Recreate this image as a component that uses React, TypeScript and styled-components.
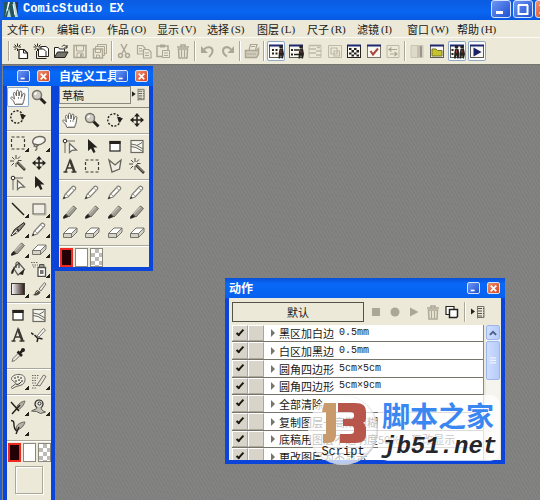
import React from "react";
import styled, { createGlobalStyle, css } from "styled-components";

const GlobalStyle = createGlobalStyle`
  *, *::before, *::after { box-sizing: border-box; }
  body {
    margin: 0;
    overflow: hidden;
    background: #808080;
    color: #1a1814;
    font: 11px/14px "Noto Sans CJK SC", sans-serif;
  }
  button { font: inherit; color: inherit; padding: 0; margin: 0; border: 0; background: none; }
  ul { list-style: none; margin: 0; padding: 0; }
`;

const beige = "#ece9d8";

/* ---------- icons ---------- */

const K = "#25221e";
const G = "#aca795";

const star = (
  <path d="M4.500 0.500v3M4.500 5.500v2.500M0.500 4h3M5.500 4h2.500M1.500 1.500l2 2M7.500 1.500l-2 2M1.500 7l2-2" stroke={K} fill="none" />
);

const hand = (
  <>
    <path
      d="M5 15.500L3.500 12 1 9.500c-.8-1 .6-2 1.600-1.200L4.500 10 3.500 4.500c0-1.500 1.600-1.500 2-.2L6.500 7V2.500C6.500.8 8.400.8 8.600 2.500L9 7l.8-4c.4-1.500 2-1.200 2 .2L11.500 8l1.500-3c.7-1.300 2.200-.6 1.900.8L14 11c-.3 2-1.300 3.300-1.500 4.500z"
      fill="#fff" stroke="#66635b" />
    <path d="M6 15h6.500l1.500-4M8.500 8v2M11 8v2" stroke="#8f8c83" fill="none" />
  </>
);

const zoomGlass = (
  <>
    <path d="M9 9l5.500 5.500" stroke={K} strokeWidth="3" />
    <circle cx="6" cy="6" r="4.500" fill="#d0cdc4" stroke="#77746c" strokeWidth="1.500" />
    <path d="M4 6a2 2 0 012-2" stroke="#fff" fill="none" strokeWidth="1.500" />
  </>
);

const wand = (
  <>
    <path d="M7 7l8 8" stroke="#3c3933" strokeWidth="2.500" />
    <path d="M8 7.500l6.500 6.500" stroke="#aaa69c" />
    <path d="M6 0v4M0 6h4M8 5.500h3.500M6 8v4M2 2l2.500 2.500M10 1.500L7.500 4M1.500 10.500L4 8" stroke="#4b4842" fill="none" />
  </>
);

const move = (
  <>
    <path d="M8 2v12M2 8h12" stroke={K} strokeWidth="1.500" />
    <path d="M8 1L5 4.500h6zM8 15l-3-3.500h6zM1 8l3.500-3v6zM15 8l-3.500-3v6z" fill={K} />
  </>
);

const panelFrame = (tone: string, bar: string) => (
  <>
    <rect x="1.500" y="2.500" width="13" height="12" fill="#f8f7f2" stroke={tone} />
    <path d="M1 2.500h14" stroke={bar} strokeWidth="2" />
  </>
);

const figure = (x: number) => (
  <g transform={`translate(${x} 0)`}>
    <circle cx="2.500" cy="4" r="1.800" fill={K} />
    <path d="M1 6h3.500l1 5-1 4.500H3.200L2.500 12l-.8 3.500H0L.3 10z" fill={K} />
    <path d="M2.500 7v3" stroke="#8a3a3a" />
  </g>
);

const icons: Record<string, React.ReactNode> = {
  newPage: (
    <>
      <path d="M6 6.500h5l3.500 3.500v5.500H6z" fill="#fff" stroke={K} strokeWidth="1.200" />
      <path d="M10.500 6.500V10h4" stroke={K} fill="none" />{star}
    </>
  ),
  newPages: (
    <>
      <path d="M8 3.500h5l2.500 2v8H8z" fill="#fff" stroke={K} />
      <path d="M5.500 6h5l2.500 2.500v5H5.500z" fill="#fff" stroke={K} />
      <path d="M3.500 8v7.500h10" stroke={K} fill="none" />{star}
    </>
  ),
  open: (
    <>
      <path d="M1.500 14V4.500h4l1 1.500h5v2.500" fill="#fff" stroke={K} />
      <path d="M1.500 14.500L4.500 9H15l-3 5.500z" fill="#77746c" stroke={K} />
      <path d="M9 3.500c1.500-2 3.500-1.500 4.500.5M14 2v3h-3" stroke={K} fill="none" />
    </>
  ),
  save: (
    <>
      <path d="M2 2.500h12v12H2z" fill="none" stroke={G} strokeWidth="1.500" />
      <path d="M4.500 3v5h7V3M5 14v-4h6v4" fill="none" stroke={G} /><path d="M8 11h2v3H8z" fill={G} />
    </>
  ),
  saveAll: (
    <>
      <path d="M5.500 4V1.500h9v9H12M3.500 6V3.500h9v9H10" fill="none" stroke={G} />
      <path d="M1.500 6h9v9h-9z" fill={beige} stroke={G} strokeWidth="1.500" />
      <path d="M3.500 6v3.500h5V6M4.500 15v-3h3v3" fill="none" stroke={G} />
    </>
  ),
  cut: (
    <>
      <path d="M5 1l5 9.500M11 1L6 10.500" stroke={G} strokeWidth="1.500" />
      <circle cx="4.500" cy="12.500" r="2" fill="none" stroke={G} strokeWidth="1.500" />
      <circle cx="11.500" cy="12.500" r="2" fill="none" stroke={G} strokeWidth="1.500" />
    </>
  ),
  copy: (
    <>
      <path d="M1.500 2.500h5L9 5v6H1.500z" fill={beige} stroke={G} strokeWidth="1.200" />
      <path d="M7.500 6.500h5L15 9v6H7.500z" fill={beige} stroke={G} strokeWidth="1.200" />
      <path d="M3 5.500h3M3 8h4M9 10h4M9 12.500h4" stroke={G} />
    </>
  ),
  paste: (
    <>
      <path d="M2 3h11v10.500H2z" fill="none" stroke={G} strokeWidth="1.500" />
      <path d="M5 1.500h5v3H5z" fill={G} />
      <path d="M7.500 7.500h7v7h-7z" fill={beige} stroke={G} /><path d="M9 10h4M9 12.500h4" stroke={G} />
    </>
  ),
  trash: (
    <>
      <path d="M2 4h12M6 3.500V2h4v1.500" fill="none" stroke={G} strokeWidth="1.500" />
      <path d="M3.500 6h9L12 15H4z" fill="none" stroke={G} strokeWidth="1.500" />
      <path d="M6.500 7v7M9.500 7v7" stroke={G} strokeWidth="1.200" />
    </>
  ),
  undo: (
    <>
      <path d="M5 6.500c3-4 9-2.500 8.500 2C13.300 11 12 12 10 14" fill="none" stroke={G} strokeWidth="2" />
      <path d="M2 3v7h7z" fill={G} />
    </>
  ),
  redo: (
    <>
      <path d="M11 6.500c-3-4-8-2.500-8 1.500 0 3 2 4 4 5.500" fill="none" stroke={G} strokeWidth="2" />
      <path d="M14 3v7H7.500z" fill={G} />
    </>
  ),
  print: (
    <>
      <path d="M5 7l1.500-5.500H13L11.500 7" fill={beige} stroke={G} strokeWidth="1.200" />
      <path d="M1.500 7.500h11l2-2V11l-2 3.500h-11z" fill="#d3cebc" stroke={G} strokeWidth="1.500" />
      <path d="M3 11h9M7 3.500h4" stroke={G} strokeWidth="1.200" />
    </>
  ),
  toolPanel: (
    <>
      {panelFrame("#5c5a57", "#1c2870")}
      <path d="M4 6h2v2H4zM7.500 6h2v2h-2zM4 9.500h2v2H4zM7.500 9.500h2v2h-2z" fill={K} />{figure(10.5)}
    </>
  ),
  listPanel: (
    <>
      {panelFrame("#5c5a57", "#1c2870")}
      <path d="M3 6h2v2H3zM3 10.500h2v2H3z" fill={K} /><path d="M6 7h5M6 11.500h5" stroke={K} strokeWidth="1.500" />{figure(10.5)}
    </>
  ),
  stackPanel: (
    <>
      <path d="M2 2.500h12v12H2z" fill="none" stroke="#c3bfae" />
      <path d="M2 2.500h12M2 6h7M9 8h5M2 10h7M9 12h5M10 4.500h3" stroke="#bdb8a7" strokeWidth="1.500" />
    </>
  ),
  framePanel: (
    <>
      <path d="M1.500 2.500h13v12h-13z" fill="none" stroke="#bdb8a7" />
      <path d="M4 5h6v6H4zM7 8h5.500v5H7z" fill="none" stroke="#bdb8a7" strokeWidth="1.200" />
    </>
  ),
  checkerPanel: (
    <>
      {panelFrame(K, "#1c2870")}
      <path d="M3 5h2.500v2H3zM8 5h2.500v2H8zM5.500 7H8v2.500H5.500zM10.500 7H13v2.500h-2.500zM3 9.500h2.500v2H3zM8 9.500h2.500v2H8zM5.500 11.500H8v2H5.500zM10.500 11.500H13v2h-2.500z" fill={K} />
    </>
  ),
  checkPanel: (
    <>
      {panelFrame("#77746c", "#1c2870")}
      <path d="M4.500 8l2.500 3.500L12 5.500" fill="none" stroke="#a8483c" strokeWidth="2" />
    </>
  ),
  swapPanel: (
    <>
      <path d="M2 2.500h12v12H2z" fill="none" stroke="#bdb8a7" />
      <path d="M4 6.500h8M6.500 4.500l-2.500 2 2.500 2M12 11H5M9.500 9l2.500 2-2.500 2" fill="none" stroke={G} strokeWidth="1.200" />
    </>
  ),
  tonePanel: (
    <>
      <path d="M2 2.500h12v12H2z" fill="#dedac9" stroke="#cbc6b4" />
      <path d="M8 3h3v11H8z" fill="#c5c0af" /><path d="M11 3h2v11h-2z" fill="#99958a" />
    </>
  ),
  folderPanel: (
    <>
      {panelFrame("#5c5a57", "#1c2870")}
      <path d="M3 13V6h4l1.500 1.500H13V13z" fill="#c5c42c" stroke="#77752a" />
    </>
  ),
  peoplePanel: (
    <>
      {panelFrame("#5c5a57", "#1c2870")}
      <path d="M2.500 6h2v2h-2zM2.500 10h2v2h-2z" fill={K} />{figure(5)}{figure(10.5)}
    </>
  ),
  playPanel: (
    <>
      {panelFrame("#5c5a57", "#1c2870")}
      <path d="M4.500 4.500v9l8-4.500z" fill="#172365" />
    </>
  ),
  hand,
  zoomGlass,
  rotate: (
    <>
      <circle cx="7" cy="8" r="6.200" fill="none" stroke={K} strokeWidth="1.400" strokeDasharray="2 1.500" />
      <path d="M10 4.500l6 2-4 4.500z" fill={K} />
    </>
  ),
  marquee: <rect x="1.500" y="2" width="13" height="12" fill="none" stroke="#3c3933" strokeWidth="1.200" strokeDasharray="3 2" />,
  lasso: (
    <>
      <path d="M4.500 10C-1 8 2 2 8.500 1.500c6-.3 7.500 4 3.500 6.500C10 9.500 7 10 5 9.500" fill="#f6f5ee" stroke="#6c6961" strokeWidth="1.400" />
      <path d="M4 9l3 1.500-1.500 1.500L3 11zM5.500 12c1 1.500 0 3-1.500 3.500" fill="none" stroke="#6c6961" strokeWidth="1.200" />
    </>
  ),
  wand,
  move,
  node: (
    <>
      <path d="M3 3h10M3 3v12" stroke="#6c6961" /><circle cx="3" cy="3" r="1.800" fill="#fff" stroke={K} />
      <path d="M7.500 5.500v9l2.500-2.200 4.500-.3z" fill="#fff" stroke="#6c6961" strokeWidth="1.300" />
    </>
  ),
  arrow: <path d="M4 1v12l3-2.500L9.500 15l2-1L9.500 9.500h4z" fill={K} />,
  line: <path d="M2 2l12 12" stroke={K} strokeWidth="1.500" />,
  rect: (
    <>
      <rect x="2" y="3" width="12" height="10" fill="#f0eee4" stroke="#6c6961" strokeWidth="1.200" />
      <path d="M3 14h12V4" fill="none" stroke="#bcb8aa" />
    </>
  ),
  pen: (
    <>
      <path d="M1 15l3.500-6.500L14 1.500l1 1.500-6.500 8z" fill="#8b887f" stroke={K} />
      <path d="M2 14l5-5M6 12l4-2" stroke="#f0eee4" /><path d="M7 8l2 2.500" stroke={K} strokeWidth="1.500" />
    </>
  ),
  pencil: (
    <>
      <path d="M1.500 14.500L3 10.500 10.500 2.500c1-1.200 4.200 1 3 2.700L6 13z" fill="#fff" stroke="#817e75" strokeWidth="1.200" />
      <path d="M9.500 4l3 2.500M4 10l2 2" stroke="#aaa69c" /><path d="M1 15l1-2.500L3.500 14z" fill={K} />
    </>
  ),
  marker: (
    <>
      <path d="M4 10l7.500-8 3 2.500L7 13z" fill="#a09d93" stroke="#6c6961" />
      <path d="M4.500 10l7-7" stroke="#e3e1d8" /><path d="M3.500 10L6.500 13l-1.500.5L1.500 15 1 13z" fill={K} />
    </>
  ),
  eraser: (
    <>
      <path d="M1.500 9.500L7 4h8L9.500 9.500z" fill="#fff" stroke="#77746c" />
      <path d="M1.500 9.500h8v4h-8zM9.500 9.500L15 4v4l-5.500 5.500z" fill="#d5d2c8" stroke="#77746c" />
    </>
  ),
  bucket: (
    <>
      <path d="M3.500 7L9 2l5.500 6.500L8 14z" fill="#e8e6dd" stroke="#5c5a53" strokeWidth="1.200" />
      <path d="M6 7V2.500c0-2 3-2 3 0V7" fill="none" stroke={K} /><path d="M1.500 13c-1-2 1-6 4-6.500L4 8.500c0 2-.5 4.500-2.500 4.500zM9 13l5.500-5-1.500 6z" fill={K} />
    </>
  ),
  spray: (
    <>
      <path d="M7 6.500h7.500v9H7z" fill="#fff" stroke="#55524c" strokeWidth="1.300" />
      <path d="M8.500 6V3.500H13V6" fill="#99958a" stroke="#55524c" /><rect x="9" y="9" width="3.500" height="4" fill="#77746c" />
      <path d="M0 1.500h7M1 4h6M2 6h3" stroke="#6c6961" strokeDasharray="1.500 1" />
    </>
  ),
  gradient: (
    <>
      <defs>
        <linearGradient id="toneRamp"><stop stopColor="#fff" /><stop offset="1" stopColor="#2b1713" /></linearGradient>
      </defs>
      <rect x="1.500" y="2.500" width="13" height="11" fill="url(#toneRamp)" stroke="#3c3933" />
    </>
  ),
  brush: (
    <>
      <path d="M8 8l5.500-6.500L15 3l-5 7z" fill="#e8e6dd" stroke="#77746c" />
      <path d="M1.500 14c3 0 2-4 5-5l3 2c-1 3-4 4-8 3z" fill="#4b4842" /><path d="M5 12l2-2" stroke="#c5c2b8" />
    </>
  ),
  window: (
    <>
      <rect x="3" y="3.500" width="10" height="9.500" fill="#fff" stroke={K} strokeWidth="1.200" />
      <path d="M2.500 4.500h11" stroke={K} strokeWidth="3" />
    </>
  ),
  split: (
    <>
      <rect x="2" y="2.500" width="12" height="12" fill="#f6f5ee" stroke="#6c6961" strokeWidth="1.200" />
      <path d="M2 6l5 1 7 4M2 8.500l5 1 7 4M8 7.500l5-3" fill="none" stroke="#6c6961" />
    </>
  ),
  letter: (
    <>
      <path d="M3.500 14L8 2l4.500 12M5 10h6" fill="none" stroke="#3c3933" strokeWidth="1.500" />
      <path d="M8 2l4.500 12" stroke="#3c3933" strokeWidth="2.500" /><path d="M1.500 14h4M9.500 14h5" stroke="#3c3933" strokeWidth="1.500" />
    </>
  ),
  ink: (
    <>
      <path d="M6 9l6.500-7.500 2 1.500L8 10z" fill="#fff" stroke="#77746c" />
      <path d="M0 6l2.500 1.500M3.500 8l3 3M7 11l-1 4M7.500 11l4 1" stroke={K} strokeWidth="1.500" />
    </>
  ),
  dropper: (
    <>
      <path d="M2 14.500l1-3 5.500-5.500 2 2L5 13.500z" fill="#e8e6dd" stroke="#77746c" />
      <path d="M7.500 4.500l4.500 4.500M9.500 6.500L13 3" stroke={K} strokeWidth="2.500" /><circle cx="13" cy="3" r="2" fill={K} />
    </>
  ),
  finger: (
    <>
      <path d="M1 14.500l5-4-4.500-4C1 3 6 1 9 1.500c4 0 6 2 6 5 0 3-2 5.500-5 6l-4 1-3.500 2z" fill="#f0eee4" stroke="#66635b" />
      <path d="M4 4h2v2H4zM7 3h2v2H7zM10 4h2v2h-2zM5 7h2v2H5zM8 6h2v2H8zM11 7h2v2h-2z" fill="#8f8c83" /><path d="M6 11c1 1 4 0 5-2" fill="none" stroke={K} />
    </>
  ),
  blurTool: (
    <>
      <path d="M6 12l6.500-10 2.500 1.500L9 13z" fill="#e8e6dd" stroke="#77746c" />
      <path d="M1 2.500h7M1 5h6M1 7.500h5M1 10h4M2 12.500h4M1 15h4" stroke="#6c6961" strokeDasharray="1.500 1" />
    </>
  ),
  crossPen: (
    <>
      <path d="M6 10c1-4 4-7 9-8-1 4-4 8-8 9z" fill="#b3b0a6" stroke="#6c6961" />
      <path d="M1 3l8 9M10 6l-8 9" stroke={K} strokeWidth="1.500" />
    </>
  ),
  stamp: (
    <>
      <circle cx="8" cy="5" r="4" fill="#e3e1d8" stroke={K} strokeWidth="1.200" /><circle cx="8.500" cy="4.500" r="1.500" fill="#fff" stroke={K} />
      <path d="M6 8c0 3-3 2-5.500 4l5 .5 4 2 5-1.500C12 12 10 11 10 8" fill="#c3c0b6" stroke="#5c5a53" />
    </>
  ),
  curvePen: (
    <>
      <path d="M6 9c1-4 5-6 9-6-1 4-4 7-8 8z" fill="#b3b0a6" stroke="#6c6961" />
      <path d="M1 1.500c3 0 3 2 3 5s1 4 2.500 5.500M9 8l-3 7" stroke={K} fill="none" strokeWidth="1.400" />
    </>
  ),
  polygon: <path d="M2 2l6 5 6-5-1.500 9L5 14z" fill="#f0eee4" stroke="#66635b" strokeWidth="1.300" />,
  panelMenu: (
    <>
      <path d="M1 4.500v6L5 7.500z" fill={K} />
      <path d="M7.500 2v12.500M7.500 2.500H14v11H7.500" fill="none" stroke="#77746c" />
      <path d="M8 4.500h6M8 7h6M8 9.500h6M8 12h6" stroke="#55524c" strokeDasharray="4 1" />
    </>
  ),
  stop: <rect x="4" y="4" width="8" height="8" fill={G} />,
  record: <circle cx="8" cy="8" r="4.500" fill={G} />,
  play: <path d="M4 3.500v9L12.500 8z" fill={G} />,
  duplicate: (
    <>
      <path d="M2 2.500h8v8H2z" fill="#fff" stroke={K} strokeWidth="1.200" />
      <path d="M5.500 5.500h8v7l-1 1h-7z" fill="#fff" stroke={K} strokeWidth="1.500" />
    </>
  ),
};

const Glyph = styled.svg<{ $size?: number }>`
  display: block;
  flex: none;
  width: ${(p) => p.$size ?? 16}px;
  height: ${(p) => p.$size ?? 16}px;
`;

const Icon = ({ name, size }: { name: string; size?: number }) => (
  <Glyph viewBox="0 0 16 16" $size={size} aria-hidden="true">{icons[name]}</Glyph>
);

/* ---------- main window ---------- */

const Frame = styled.div`
  display: flex;
  flex-direction: column;
  height: 100vh;
  overflow: hidden;
  border-left: 2px solid #1c5fdc;
`;

const TitleBar = styled.header`
  display: flex;
  flex: none;
  align-items: center;
  height: 20px;
  padding-left: 2px;
  overflow: hidden;
  background: linear-gradient(#0a5be0, #0a66f2 60%, #0558e2);
`;

const AppTitle = styled.h1`
  margin: 0 auto 0 3px;
  padding-bottom: 3px;
  color: #fff;
  font: bold 12px/14px "Liberation Mono", monospace;
`;

const WindowControls = styled.div`
  display: flex;
  align-self: flex-start;
  gap: 2px;
  margin-right: -15px;
`;

const ControlButton = styled.button<{ $close?: boolean; $small?: boolean }>`
  display: grid;
  place-items: center;
  flex: none;
  width: ${(p) => (p.$small ? 13 : 20)}px;
  height: ${(p) => (p.$small ? 12 : 18)}px;
  border: 1px solid #d5e2fb;
  border-radius: ${(p) => (p.$small ? 2 : 3)}px;
  background: ${(p) => (p.$close ? "linear-gradient(135deg, #ee9070, #d8431c)" : "linear-gradient(135deg, #6d97f3, #1e50d2)")};
`;

const Controls = ({ small, maximise }: { small?: boolean; maximise?: boolean }) => (
  <>
    <ControlButton $small={small} aria-label="最小化">
      <Glyph viewBox="0 0 16 16" $size={small ? 9 : 16}><path d="M3 11.500h7" stroke="#fff" strokeWidth="3" /></Glyph>
    </ControlButton>
    {maximise && (
      <ControlButton aria-label="最大化">
        <Glyph viewBox="0 0 16 16"><path d="M3.500 4v9h9V4M3 4h10" fill="none" stroke="#fff" strokeWidth="2" /></Glyph>
      </ControlButton>
    )}
    <ControlButton $small={small} $close aria-label="关闭">
      <Glyph viewBox="0 0 16 16" $size={small ? 9 : 16}><path d="M3 3l10 10M13 3L3 13" stroke="#fff" strokeWidth="3" /></Glyph>
    </ControlButton>
  </>
);

const MenuBar = styled.nav`
  display: flex;
  flex: none;
  height: 18px;
  padding-left: 5px;
  background: ${beige};
  border-bottom: 1px solid #fbfaf4;
`;

const MenuItem = styled.button`
  display: flex;
  flex: none;
  align-items: center;
  gap: 2px;
  width: 50px;
  white-space: nowrap;
  kbd { font: 11px/14px "Liberation Serif", serif; }
`;

const ToolBar = styled.div`
  display: flex;
  flex: none;
  align-items: center;
  height: 27px;
  padding-left: 4px;
  background: ${beige};
  border-bottom: 1px solid #77756e;
`;

const ToolGroup = styled.div<{ $width: number }>`
  display: flex;
  flex: none;
  justify-content: space-between;
  width: ${(p) => p.$width}px;
`;

const Separator = styled.span`
  flex: none;
  width: 2px;
  height: 20px;
  margin: 0 2px;
  border-left: 1px solid #aca899;
  border-right: 1px solid #fff;
`;

const pressed = css`
  background: #fbfcfe;
  box-shadow: inset 0 0 0 1px #8da7c4;
  border-radius: 2px;
`;

const ToolButton = styled.button<{ $pressed?: boolean }>`
  display: grid;
  place-items: center;
  width: 18px;
  height: 20px;
  ${(p) => p.$pressed && pressed}
`;

const Desk = styled.main`
  position: relative;
  flex: 1;
  background: repeating-linear-gradient(60deg, #7d7d7e 0 1px, #838382 1px 3px);
`;

/* ---------- floating palettes ---------- */

const Palette = styled.section<{ $x: number; $y: number; $w: number; $h?: number }>`
  position: absolute;
  left: ${(p) => p.$x}px;
  top: ${(p) => p.$y}px;
  width: ${(p) => p.$w}px;
  ${(p) => (p.$h ? `height: ${p.$h}px;` : "")}
  display: flex;
  flex-direction: column;
  border: solid #0a44d8;
  border-width: 0 4px 4px;
`;

const PaletteTitle = styled.header`
  display: flex;
  flex: none;
  align-items: center;
  justify-content: flex-end;
  gap: 7px;
  height: 20px;
  margin: 0 -4px;
  padding: 0 5px 0 4px;
  background: linear-gradient(#0a4fd8, #0869f6 30%, #0660ee);
`;

const PaletteName = styled.h2`
  flex: 1;
  width: 0;
  margin: 0;
  color: #fff;
  font: bold 12px/16px "Noto Sans CJK SC", sans-serif;
  white-space: nowrap;
`;

const PaletteBody = styled.div`
  flex: 1;
  background: ${beige};
`;

const CellGroup = styled.div<{ $cols: number }>`
  display: grid;
  grid-template-columns: repeat(${(p) => p.$cols}, 1fr);
  grid-auto-rows: 20px;
  padding: 1px 1px 3px 0;
  border-bottom: 1px solid #aca899;
  box-shadow: 0 1px #fff;
  margin-bottom: 1px;
`;

const Cell = styled.button<{ $pressed?: boolean }>`
  position: relative;
  display: grid;
  place-items: center;
  ${(p) => p.$pressed && pressed}
`;

const Corner = styled.span`
  position: absolute;
  right: 0;
  bottom: 1px;
  width: 4px;
  height: 4px;
  background: linear-gradient(135deg, transparent 50%, ${K} 50%);
`;

const Swatches = styled.div`
  display: flex;
  gap: 2px;
  padding: 1px 0 0 1px;
`;

const Swatch = styled.button<{ $kind: "ink" | "paper" | "clear" }>`
  width: 13px;
  height: 19px;
  border: ${(p) => (p.$kind === "ink" ? "2px solid #f02a20" : "1px solid #8b887e")};
  background: ${(p) =>
    p.$kind === "ink" ? "#220205" : p.$kind === "paper" ? "#fff" : "repeating-conic-gradient(#bdbbb5 0 25%, #fff 0 50%) 0 0 / 8px 8px"};
`;

const Preview = styled.div`
  width: 28px;
  height: 28px;
  margin: 4px 0 0 8px;
  border: 1px solid #aca899;
  box-shadow: inset 1px 1px #fff, 1px 1px #fff;
`;

const PickerRow = styled.div`
  display: flex;
  align-items: center;
  justify-content: space-between;
  height: 22px;
  padding: 0 3px 4px 0;
  border-bottom: 1px solid #8b887e;
  margin-bottom: 1px;
`;

const Picker = styled.select`
  appearance: none;
  width: 72px;
  height: 18px;
  padding: 0 2px;
  border: 1px solid #8b887e;
  border-radius: 0;
  background: ${beige};
  color: inherit;
  font: 11px/16px "Noto Sans CJK SC", sans-serif;
`;

type Tool = { icon: string; label: string; more?: boolean; on?: boolean };
const t = (icon: string, label: string, more = false, on = false): Tool => ({ icon, label, more, on });

const mainTools: Tool[][] = [
  [t("hand", "抓手", false, true), t("zoomGlass", "缩放"), t("rotate", "旋转")],
  [t("marquee", "选框", true), t("lasso", "套索", true), t("wand", "魔棒"), t("move", "移动"), t("node", "节点"), t("arrow", "对象")],
  [
    t("line", "直线", true), t("rect", "矩形", true), t("pen", "钢笔", true), t("pencil", "铅笔", true), t("marker", "马克笔", true),
    t("eraser", "橡皮", true), t("bucket", "填充"), t("spray", "喷枪", true), t("gradient", "渐变", true), t("brush", "毛笔", true),
  ],
  [t("window", "分格"), t("split", "切分"), t("letter", "文字"), t("ink", "描线"), t("dropper", "吸管")],
  [t("finger", "涂抹", true), t("blurTool", "模糊", true)],
  [t("crossPen", "修线", true), t("stamp", "图章", true), t("curvePen", "曲线", true)],
];

const customTools: Tool[][] = [
  [t("hand", "抓手"), t("zoomGlass", "缩放"), t("rotate", "旋转"), t("move", "移动")],
  [
    t("node", "节点"), t("arrow", "对象"), t("window", "分格"), t("split", "切分"),
    t("letter", "文字"), t("marquee", "选框"), t("polygon", "多边形"), t("wand", "魔棒"),
  ],
  ["pencil", "marker", "eraser"].flatMap((icon) => [1, 2, 3, 4].map((n) => t(icon, `${icon} ${n}`))),
];

const Cells = ({ groups, cols }: { groups: Tool[][]; cols: number }) => (
  <>
    {groups.map((group, i) => (
      <CellGroup key={i} $cols={cols}>
        {group.map((tool) => (
          <Cell key={tool.label} $pressed={tool.on} aria-label={tool.label}>
            <Icon name={tool.icon} />
            {tool.more && <Corner />}
          </Cell>
        ))}
      </CellGroup>
    ))}
  </>
);

const InkSwatches = () => (
  <Swatches>
    <Swatch $kind="ink" aria-label="黑" />
    <Swatch $kind="paper" aria-label="白" />
    <Swatch $kind="clear" aria-label="透明" />
  </Swatches>
);

/* ---------- action window ---------- */

const ActionBody = styled(PaletteBody)`
  display: flex;
  flex-direction: column;
  min-height: 0;
  padding: 0 1px 0 3px;
`;

const ActionTools = styled.div`
  display: flex;
  flex: none;
  align-items: center;
  height: 27px;
  gap: 1px;
`;

const SetButton = styled.button`
  width: 132px;
  height: 20px;
  margin-right: 2px;
  border: 1px solid #55524c;
`;

const ListArea = styled.div`
  display: flex;
  flex: 1;
  min-height: 0;
  gap: 2px;
`;

const ActionList = styled.ul`
  flex: 1;
  overflow: hidden;
  background: #fff;
  border-right: 1px solid #8b887e;
`;

const ActionRow = styled.li`
  height: 18px;
  border-bottom: 1px solid #77746c;
  &:nth-child(3n + 1) { height: 17px; }
`;

const ActionLabel = styled.label`
  display: flex;
  align-items: center;
  height: 100%;
  white-space: nowrap;
`;

const CheckCell = styled.input`
  appearance: none;
  display: grid;
  place-items: center;
  width: 16px;
  height: 100%;
  margin: 0;
  border: 1px solid;
  border-color: #fff #aca899 #aca899 #fff;
  background: #d8d4ca;
  &:checked::before {
    content: "";
    width: 8px;
    height: 4px;
    border: solid #1a1814;
    border-width: 0 0 2px 2px;
    rotate: -48deg;
    margin-bottom: 3px;
  }
`;

const Expander = styled.span`
  margin: 0 4px 0 7px;
  border: solid transparent;
  border-width: 4px 0 4px 4px;
  border-left-color: #77746c;
`;

const Latin = styled.span`
  margin-left: 5px;
  font: 10px/14px "Liberation Mono", monospace;
`;

const ScrollBar = styled.div`
  display: flex;
  flex-direction: column;
  gap: 1px;
  width: 14px;
  background: #f5f4ee;
`;

const ScrollPart = styled.button<{ $thumb?: boolean }>`
  display: grid;
  place-items: center;
  height: ${(p) => (p.$thumb ? 39 : 15)}px;
  border: 1px solid #9db7ee;
  border-radius: 2px;
  background: linear-gradient(90deg, #cfdefe, #b5cbfb);
`;

/* ---------- site badge lying over the action window ---------- */

const Badge = styled.div`
  position: absolute;
  left: 306px;
  top: 330px;
  display: flex;
  align-items: flex-start;
`;

const Seal = styled.div`
  display: flex;
  flex-direction: column;
  align-items: center;
  width: 70px;
  height: 70px;
  padding-top: 6px;
  border-radius: 50%;
  background: rgba(255, 255, 255, 0.72);
  box-shadow: inset -1px -1px 2px #c3c5cd;
  font: 12px/14px "Liberation Mono", monospace;
`;

const SealMark = styled.svg`
  width: 48px;
  height: 44px;
`;

const SiteName = styled.div`
  padding: 2px 3px 0 4px;
  border-radius: 10px;
  background: rgba(255, 255, 255, 0.74);
  strong {
    display: block;
    color: #3b87f2;
    font: bold 28px/36px "Noto Sans CJK SC", sans-serif;
    white-space: nowrap;
    text-shadow: 0 0 2px #fff;
  }
  em {
    display: block;
    font: italic bold 24px/28px "Liberation Mono", monospace;
    color: #25262b;
    text-shadow: 0 0 3px #fff;
  }
`;

const menus = [
  ["文件", "(F)"], ["编辑", "(E)"], ["作品", "(O)"], ["显示", "(V)"], ["选择", "(S)"],
  ["图层", "(L)"], ["尺子", "(R)"], ["滤镜", "(I)"], ["窗口", "(W)"], ["帮助", "(H)"],
];

const barGroups: { width: number; tools: Tool[] }[] = [
  { width: 97, tools: [t("newPage", "新建"), t("newPages", "新建作品"), t("open", "打开"), t("save", "保存"), t("saveAll", "全部保存")] },
  { width: 77, tools: [t("cut", "剪切"), t("copy", "复制"), t("paste", "粘贴"), t("trash", "删除")] },
  { width: 39, tools: [t("undo", "撤销"), t("redo", "重做")] },
  { width: 18, tools: [t("print", "打印")] },
  {
    width: 135,
    tools: [
      t("toolPanel", "工具", false, true), t("listPanel", "图层"), t("stackPanel", "属性"), t("framePanel", "导航"),
      t("checkerPanel", "网点"), t("checkPanel", "动作"), t("swapPanel", "切换"),
    ],
  },
  { width: 78, tools: [t("tonePanel", "色调"), t("folderPanel", "素材"), t("peoplePanel", "自定义", false, true), t("playPanel", "播放", false, true)] },
];

const actions: { name: string; size?: string }[] = [
  { name: "黑区加白边", size: "0.5mm" },
  { name: "白区加黑边", size: "0.5mm" },
  { name: "圆角四边形", size: "5cm×5cm" },
  { name: "圆角四边形", size: "5cm×9cm" },
  { name: "全部清除" },
  { name: "复制图层→高斯模糊" },
  { name: "底稿用图层不透明度50%、更改显示" },
  { name: "更改图层为不显示" },
];

export default function App() {
  return (
    <Frame>
      <GlobalStyle />
      <TitleBar>
        <Glyph viewBox="0 0 16 16" aria-hidden="true">
          <path d="M0 0h14v15H0z" fill="#b5d8dc" />
          <path d="M0 0h4L1 15H0zM6 0h3l2 15H7L5 6 3 15H1z" fill="#24565c" />
          <path d="M11 0h3v15z" fill="#334" />
          <path d="M5 0L3 9M9 2l2 11" stroke="#fff" />
        </Glyph>
        <AppTitle>ComicStudio EX</AppTitle>
        <WindowControls><Controls maximise /></WindowControls>
      </TitleBar>
      <MenuBar>
        {menus.map(([name, key]) => (
          <MenuItem key={name}>{name}<kbd>{key}</kbd></MenuItem>
        ))}
      </MenuBar>
      <ToolBar>
        {barGroups.map((group, i) => (
          <React.Fragment key={i}>
            <Separator />
            <ToolGroup $width={group.width}>
              {group.tools.map((tool) => (
                <ToolButton key={tool.label} $pressed={tool.on} aria-label={tool.label}><Icon name={tool.icon} /></ToolButton>
              ))}
            </ToolGroup>
          </React.Fragment>
        ))}
      </ToolBar>
      <Desk>
        <Palette $x={1} $y={1} $w={52} $h={450}>
          <PaletteTitle><Controls small /></PaletteTitle>
          <PaletteBody>
            <Cells groups={mainTools} cols={2} />
            <InkSwatches />
            <Preview />
          </PaletteBody>
        </Palette>

        <Palette $x={53} $y={1} $w={98}>
          <PaletteTitle><PaletteName>自定义工具</PaletteName><Controls small /></PaletteTitle>
          <PaletteBody>
            <PickerRow>
              <Picker aria-label="工具组"><option>草稿</option></Picker>
              <Cell aria-label="菜单"><Icon name="panelMenu" size={15} /></Cell>
            </PickerRow>
            <Cells groups={customTools} cols={4} />
            <InkSwatches />
          </PaletteBody>
        </Palette>

        <Palette $x={223} $y={213} $w={280} $h={186}>
          <PaletteTitle><PaletteName>动作</PaletteName><Controls small /></PaletteTitle>
          <ActionBody>
            <ActionTools>
              <SetButton>默认</SetButton>
              {["stop", "record", "play", "trash", "duplicate"].map((name) => (
                <ToolButton key={name} aria-label={name}><Icon name={name} /></ToolButton>
              ))}
              <Separator />
              <ToolButton aria-label="菜单"><Icon name="panelMenu" /></ToolButton>
            </ActionTools>
            <ListArea>
              <ActionList>
                {actions.map((action, i) => (
                  <ActionRow key={i}>
                    <ActionLabel>
                      <CheckCell type="checkbox" defaultChecked />
                      <CheckCell type="checkbox" aria-label="对话框" />
                      <Expander />
                      {action.name}
                      {action.size && <Latin>{action.size}</Latin>}
                    </ActionLabel>
                  </ActionRow>
                ))}
              </ActionList>
              <ScrollBar>
                <ScrollPart aria-label="向上">
                  <Glyph viewBox="0 0 16 16" $size={10}><path d="M3 11l5-5 5 5" fill="none" stroke="#4a5f8c" strokeWidth="3" /></Glyph>
                </ScrollPart>
                <ScrollPart $thumb aria-label="滚动">
                  <Glyph viewBox="0 0 16 16" $size={10}><path d="M3 3h10M3 7h10M3 11h10" stroke="#eef4ff" strokeWidth="2" /></Glyph>
                </ScrollPart>
              </ScrollBar>
            </ListArea>
          </ActionBody>
        </Palette>

        <Badge>
          <Seal>
            <SealMark viewBox="0 0 48 44" aria-hidden="true">
              <path d="M5 2h12v32c0 5-3 8-8 8H4v-9h3V11H3z" fill="#c89a6c" />
              <path d="M19 2h17c8 0 11 3 11 9v5c0 4-1 5-3 6 2 1 3 3 3 6v5c0 6-3 9-11 9H21v-9h10c3 0 4-1 4-3v-2c0-2-1-3-3-3h-8v-7h8c2 0 3-1 3-3v-1c0-2-1-3-4-3H19z" fill="#b8564c" />
            </SealMark>
            Script
          </Seal>
          <SiteName><strong>脚本之家</strong><em>jb51.net</em></SiteName>
        </Badge>
      </Desk>
    </Frame>
  );
}
